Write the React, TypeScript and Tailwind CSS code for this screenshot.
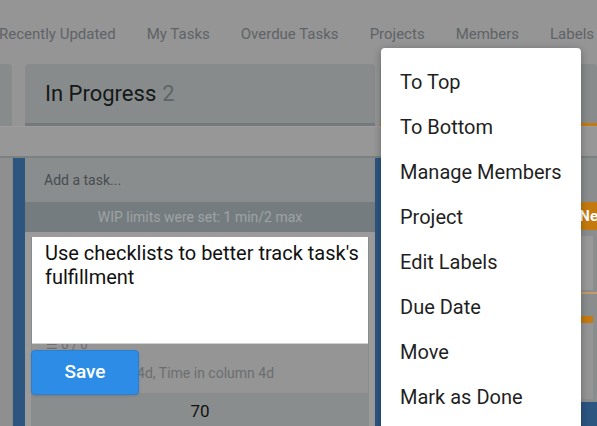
import React from 'react';

const navItems = ['Recently Updated', 'My Tasks', 'Overdue Tasks', 'Projects', 'Members', 'Labels'];
const menuItems = ['To Top', 'To Bottom', 'Manage Members', 'Project', 'Edit Labels', 'Due Date', 'Move', 'Mark as Done'];

export default function App() {
  return (
    <div className="relative w-[597px] h-[426px] overflow-hidden bg-[#959595] font-['Roboto',sans-serif]">
      {/* Top nav */}
      <div className="h-16 flex items-center gap-[31px] -ml-[1px] whitespace-nowrap text-[15px] text-[#5e6367] pt-[4px]">
        {navItems.map((item) => (
          <span key={item}>{item}</span>
        ))}
      </div>

      {/* Column headers */}
      <div className="flex h-[62px]">
        <div className="w-3 bg-[#878b8b] rounded-tr" />
        <div className="w-[13px]" />
        <div className="w-[350px] bg-[#878b8b] rounded-t border-b-[3px] border-[#747a7c] flex items-center pl-5">
          <span className="text-[22px] text-[#151818]">In Progress</span>
          <span className="text-[22px] text-[#5f6467] ml-[6px]">2</span>
        </div>
        <div className="w-[5px]" />
        <div className="flex-1 bg-[#878b8b] rounded-t border-b-[3px] border-[#c57a0f]" />
      </div>

      {/* Divider strip */}
      <div className="h-[32px] bg-[#979797] border-t border-[#9d9d9d] border-b-2 border-b-[#7b8081]" />

      {/* Column bodies */}
      <div className="flex h-[268px]">
        <div className="w-[13px] bg-[#8f8f8f] border-r border-[#868686]" />
        <div className="w-3 bg-[#2c5580]" />

        {/* In Progress column */}
        <div className="relative w-[350px] bg-[#9b9b9b] flex flex-col">
          <div className="h-[44px] bg-[#8a8d8e] flex items-center pl-[19px] text-[14px] text-[#474c4f]">
            Add a task...
          </div>
          <div className="h-[30px] bg-[#757c80] flex items-center justify-center text-[14px] text-[#9ea3a5]">
            WIP limits were set: 1 min/2 max
          </div>
          <div className="mx-[6px] mt-[5px] bg-[#959595] border-x border-[#8c8c8c] flex flex-col flex-1">
            <div className="h-[107px] bg-white pl-[13px] pr-[4px] pt-[4px] text-[20px] leading-[24px] text-[#111] border-b border-[#d0d0d0]">
              Use checklists to better track task's fulfillment
            </div>
            <div className="relative h-[6px] overflow-hidden">
              <span className="absolute left-[14px] -top-[9px] text-[13px] text-[#6b6e70]">☰ 0 / 0</span>
            </div>
            <div className="h-[43px] flex items-center pl-[40px] pt-[3px] text-[14px] text-[#6b6e70] whitespace-nowrap">
              Lead time 4d, Time in column 4d
            </div>
            <div className="flex-1 bg-[#8a8d8e] flex items-start justify-center pt-[6px] text-[17px] text-[#111]">
              70
            </div>
          </div>
          <button className="absolute left-[6px] top-[192px] w-[108px] h-[45px] rounded bg-[#2d8de6] border border-[#2a7fd0] text-white text-[19px] font-medium shadow-sm">
            Save
          </button>
        </div>

        <div className="w-[6px] bg-[#2c5580]" />

        {/* Right column (mostly hidden) */}
        <div className="flex-1 bg-[#8a8d8e] flex flex-col">
          <div className="h-[44px]" />
          <div className="h-[28px] bg-[#c57a0f] flex items-center justify-end pr-[2px] text-white font-bold text-[15px] overflow-hidden whitespace-nowrap">
            <span className="-mr-[14px]">New</span>
          </div>
          <div className="h-[6px]" />
          <div className="mx-[4px] h-[54px] bg-[#999]" />
          <div className="h-[12px] border-t-2 border-[#c79a6a] mt-[2px]" />
          <div className="h-[7px] bg-[#c57a0f] mx-[4px] mt-[12px]" />
          <div className="mx-[4px] h-[76px] bg-[#959595]" />
          <div className="flex-1 bg-[#2c5580] mt-[3px]" />
        </div>
      </div>

      {/* Context menu */}
      <div className="absolute left-[381px] top-[48px] w-[200px] h-[400px] bg-white rounded shadow-[0_2px_8px_rgba(0,0,0,0.3)] pt-[11px]">
        {menuItems.map((item) => (
          <div key={item} className="h-[45px] flex items-center pl-[19px] text-[20px] text-[#1f1f1f]">
            {item}
          </div>
        ))}
      </div>
    </div>
  );
}
